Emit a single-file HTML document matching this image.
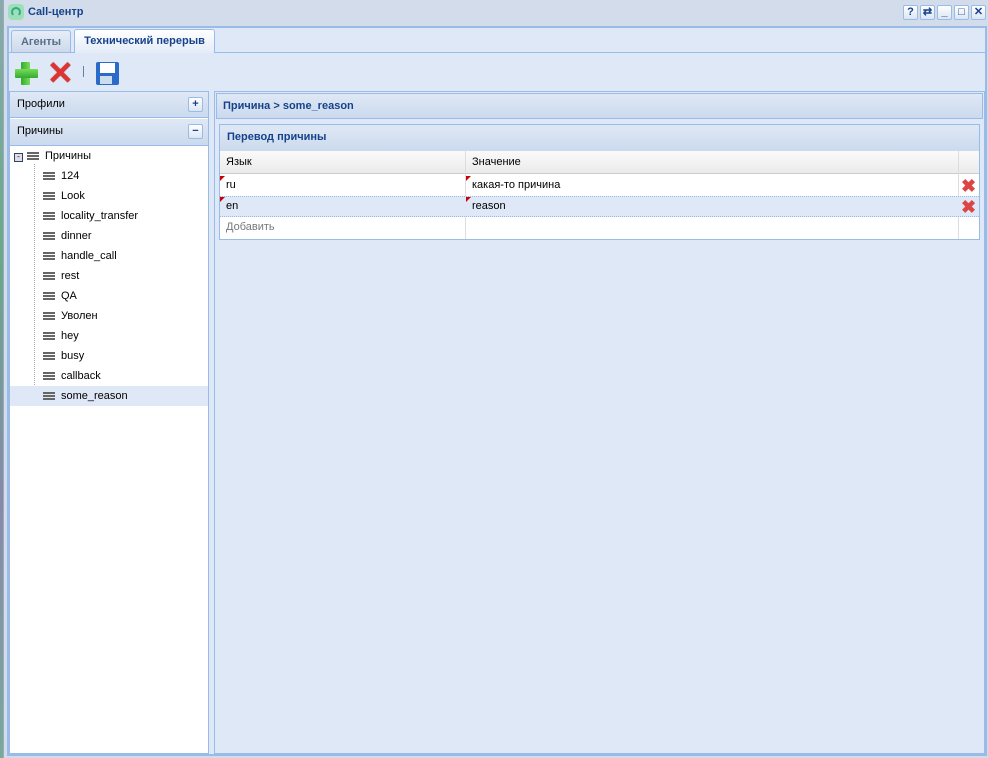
<!DOCTYPE html>
<html><head><meta charset="utf-8"><style>
*{box-sizing:border-box;margin:0;padding:0}
body{width:988px;height:758px;overflow:hidden;background:#c9d5e3;font-family:"Liberation Sans",sans-serif;font-size:11px;color:#000;position:relative}
.a{position:absolute}
.hdr{background:linear-gradient(#dfe8f5,#cbdaee);color:#15428b;font-weight:bold}
.ic{width:12px;height:8px;border-top:2px solid #666;border-bottom:2px solid #666;position:absolute}
.ic:after{content:"";position:absolute;left:0;right:0;top:1px;height:2px;background:#666}
.tr{position:absolute;left:61px;height:20px;line-height:20px}
.tb{width:15px;height:15px;border:1px solid #99bbe8;border-radius:2px;background:linear-gradient(#fff,#dbe6f4);color:#15428b;font-size:11px;text-align:center;line-height:12px;font-weight:bold}
.x{color:#d44;font-size:18px;font-weight:bold;line-height:18px}
</style></head><body>
<div class="a" style="left:0;top:0;width:4px;height:758px;background:linear-gradient(#8aa,#6a8,#88a,#7a9)"></div>
<div class="a" style="left:3px;top:0;width:985px;height:758px;background:#d2dcea;border-left:1px solid #99aabb"></div>
<div class="a" style="left:8px;top:4px;width:16px;height:16px;border-radius:4px;background:#9de0b8"></div>
<div class="a" style="left:11px;top:7px;width:10px;height:10px;border:2px solid #3a8;border-bottom-color:transparent;border-radius:50%"></div>
<div class="a" style="left:28px;top:6px;font-weight:bold;color:#15428b">Call-центр</div>
<div class="a tb" style="left:903px;top:5px">?</div>
<div class="a tb" style="left:920px;top:5px">⇄</div>
<div class="a tb" style="left:937px;top:5px">_</div>
<div class="a tb" style="left:954px;top:5px">□</div>
<div class="a tb" style="left:971px;top:5px">✕</div>
<div class="a" style="left:7px;top:26px;width:980px;height:730px;background:#dfe8f6;border:2px solid #99bbe8"></div>
<div class="a" style="left:9px;top:52px;width:976px;height:1px;background:#99bbe8"></div>
<div class="a" style="left:11px;top:30px;width:60px;height:22px;border:1px solid #99bbe8;border-bottom:0;border-radius:3px 3px 0 0;background:linear-gradient(#e6edf7,#cddaec);color:#5a6e8a;font-weight:bold;text-align:center;line-height:22px">Агенты</div>
<div class="a" style="left:74px;top:29px;width:141px;height:24px;border:1px solid #99bbe8;border-bottom:0;border-radius:3px 3px 0 0;background:linear-gradient(#fff,#e4ecf7);color:#15428b;font-weight:bold;text-align:center;line-height:23px">Технический перерыв</div>
<!-- toolbar icons -->
<div class="a" style="left:21px;top:62px;width:9px;height:23px;background:linear-gradient(90deg,#3a3,#7d5);border-radius:1px"></div>
<div class="a" style="left:15px;top:69px;width:23px;height:9px;background:linear-gradient(#7d5,#3a3);border-radius:1px"></div>
<div class="a" style="left:47px;top:58px;color:#d33;font-size:32px;font-weight:bold;line-height:30px;text-shadow:0 0 1px #800">✕</div>
<div class="a" style="left:83px;top:66px;width:1px;height:11px;background:#6680a0"></div>
<div class="a" style="left:96px;top:62px;width:23px;height:23px;background:#2a6ac8;border-radius:2px"></div>
<div class="a" style="left:100px;top:63px;width:15px;height:10px;background:#fff"></div>
<div class="a" style="left:100px;top:76px;width:12px;height:8px;background:#cde"></div>
<!-- left panel -->
<div class="a" style="left:9px;top:91px;width:200px;height:663px;background:#fff;border:1px solid #99bbe8"></div>
<div class="a hdr" style="left:10px;top:92px;width:198px;height:26px;border-bottom:1px solid #99bbe8;font-weight:normal;color:#000;padding:6px 7px">Профили</div>
<div class="a tb" style="left:188px;top:97px">+</div>
<div class="a hdr" style="left:10px;top:119px;width:198px;height:27px;border-bottom:1px solid #99bbe8;font-weight:normal;color:#000;padding:6px 7px">Причины</div>
<div class="a tb" style="left:188px;top:124px">−</div>
<div class="a" style="left:14px;top:153px;width:9px;height:9px;border:1px solid #345;background:#dde;font-size:8px;line-height:6px;text-align:center">-</div>
<div class="ic" style="left:27px;top:152px"></div>
<div class="a" style="left:45px;top:150px">Причины</div>
<div class="a" style="left:34px;top:164px;width:0;height:233px;border-left:1px dotted #aaa"></div>
<div class="a" style="left:10px;top:386px;width:198px;height:20px;background:#dfe8f6"></div>
<div class="ic" style="left:43px;top:172px"></div><div class="tr" style="top:166px">124</div>
<div class="ic" style="left:43px;top:192px"></div><div class="tr" style="top:186px">Look</div>
<div class="ic" style="left:43px;top:212px"></div><div class="tr" style="top:206px">locality_transfer</div>
<div class="ic" style="left:43px;top:232px"></div><div class="tr" style="top:226px">dinner</div>
<div class="ic" style="left:43px;top:252px"></div><div class="tr" style="top:246px">handle_call</div>
<div class="ic" style="left:43px;top:272px"></div><div class="tr" style="top:266px">rest</div>
<div class="ic" style="left:43px;top:292px"></div><div class="tr" style="top:286px">QA</div>
<div class="ic" style="left:43px;top:312px"></div><div class="tr" style="top:306px">Уволен</div>
<div class="ic" style="left:43px;top:332px"></div><div class="tr" style="top:326px">hey</div>
<div class="ic" style="left:43px;top:352px"></div><div class="tr" style="top:346px">busy</div>
<div class="ic" style="left:43px;top:372px"></div><div class="tr" style="top:366px">callback</div>
<div class="ic" style="left:43px;top:392px"></div><div class="tr" style="top:386px">some_reason</div>
<!-- right panel -->
<div class="a" style="left:214px;top:91px;width:771px;height:663px;background:#dfe8f6;border:1px solid #99bbe8"></div>
<div class="a hdr" style="left:216px;top:93px;width:767px;height:26px;border:1px solid #99bbe8;padding:6px 6px">Причина &gt; some_reason</div>
<div class="a" style="left:219px;top:124px;width:761px;height:116px;border:1px solid #99bbe8;background:#fff"></div>
<div class="a hdr" style="left:220px;top:125px;width:759px;height:26px;padding:6px 7px">Перевод причины</div>
<div class="a" style="left:220px;top:151px;width:759px;height:23px;background:linear-gradient(#fafafa,#ebebeb);border-bottom:1px solid #ccc"></div>
<div class="a" style="left:226px;top:156px">Язык</div>
<div class="a" style="left:472px;top:156px">Значение</div>
<div class="a" style="left:465px;top:151px;width:1px;height:88px;background:#ddd"></div>
<div class="a" style="left:958px;top:151px;width:1px;height:88px;background:#ddd"></div>
<div class="a" style="left:220px;top:196px;width:759px;height:21px;background:#dfe8f6;border-top:1px dotted #99bbe8;border-bottom:1px dotted #99bbe8"></div>
<div class="a" style="left:220px;top:176px;border-top:5px solid #c00;border-right:5px solid transparent"></div>
<div class="a" style="left:466px;top:176px;border-top:5px solid #c00;border-right:5px solid transparent"></div>
<div class="a" style="left:220px;top:197px;border-top:5px solid #c00;border-right:5px solid transparent"></div>
<div class="a" style="left:466px;top:197px;border-top:5px solid #c00;border-right:5px solid transparent"></div>
<div class="a" style="left:226px;top:179px">ru</div>
<div class="a" style="left:472px;top:179px">какая-то причина</div>
<div class="a" style="left:226px;top:200px">en</div>
<div class="a" style="left:472px;top:200px">reason</div>
<div class="a" style="left:226px;top:221px;color:#777">Добавить</div>
<div class="a x" style="left:961px;top:177px">✖</div>
<div class="a x" style="left:961px;top:198px">✖</div>
</body></html>
